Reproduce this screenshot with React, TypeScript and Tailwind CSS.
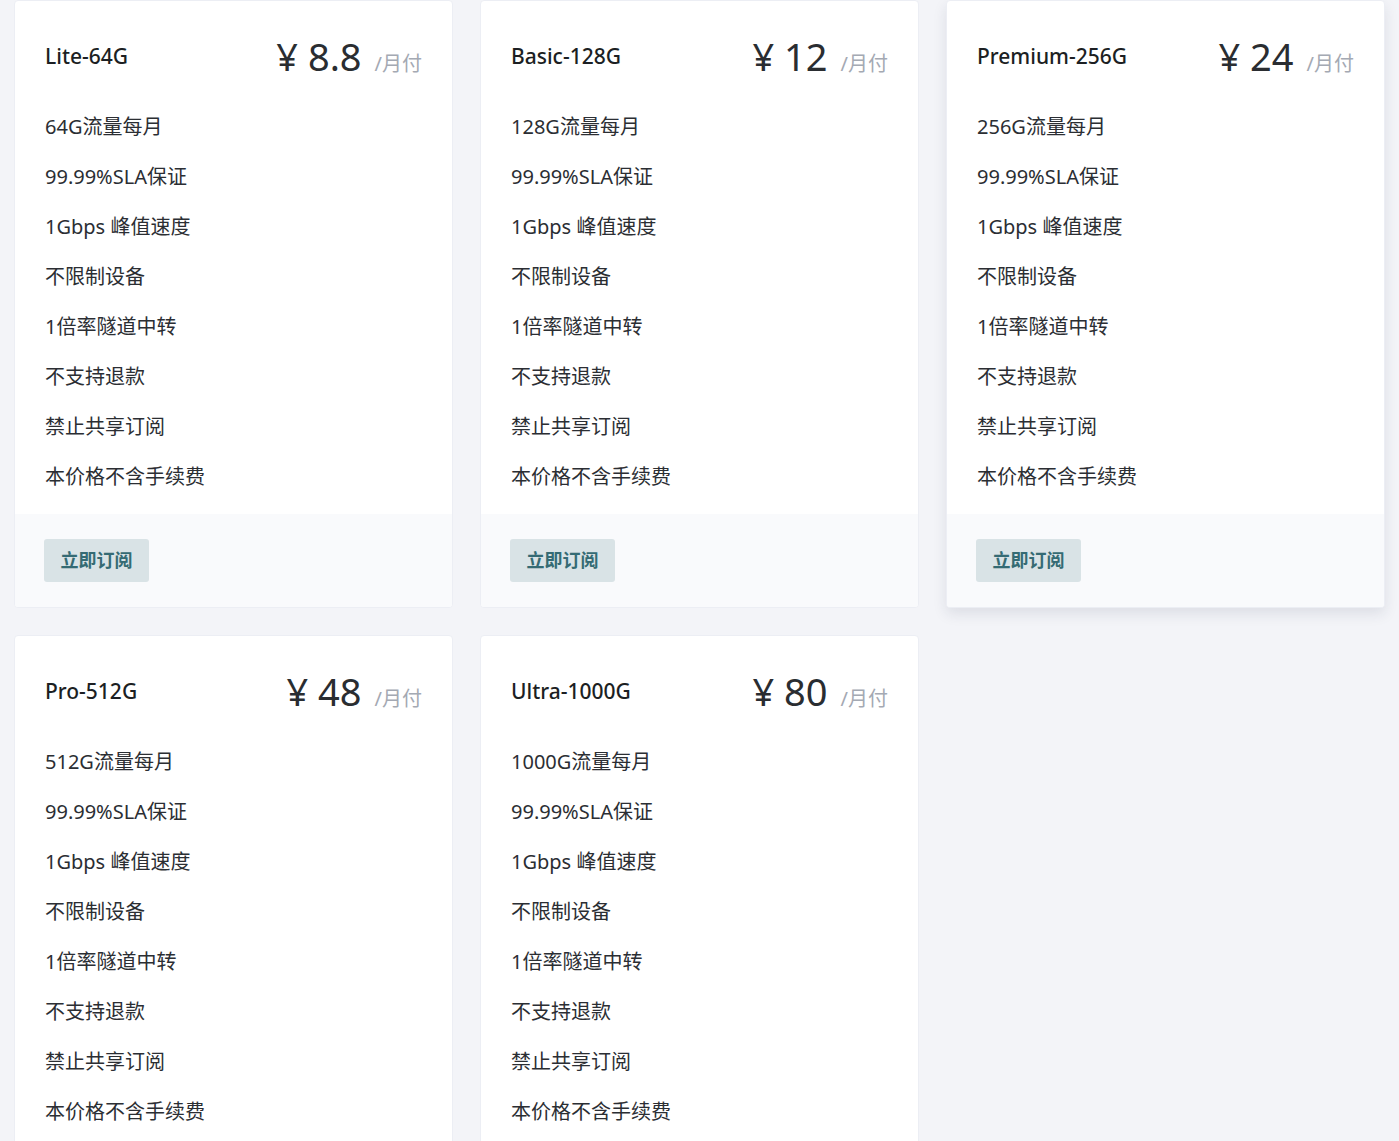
const plans = [
  { name: 'Lite-64G', price: '8.8', traffic: '64G' },
  { name: 'Basic-128G', price: '12', traffic: '128G' },
  { name: 'Premium-256G', price: '24', traffic: '256G', active: true },
  { name: 'Pro-512G', price: '48', traffic: '512G' },
  { name: 'Ultra-1000G', price: '80', traffic: '1000G' },
];

const features = [
  '99.99%SLA保证',
  '1Gbps 峰值速度',
  '不限制设备',
  '1倍率隧道中转',
  '不支持退款',
  '禁止共享订阅',
  '本价格不含手续费',
];

function PlanCard({ plan }: { plan: (typeof plans)[number] }) {
  return (
    <div
      className={
        'bg-white border border-[#eceef4] rounded-[4px] overflow-hidden ' +
        (plan.active ? 'shadow-[0_6px_14px_rgba(30,40,70,0.10)]' : '')
      }
    >
      {/* header */}
      <div className="h-[101px] px-[30px] pt-[10px] flex items-center justify-between">
        <div className="text-[21px] font-medium text-[#1c1f23]">{plan.name}</div>
        <div className="flex items-baseline">
          <span className="text-[38px] text-[#2a2d31]">¥ {plan.price}</span>
          <span className="ml-[13px] text-[20px] text-[#a4a9b3]">/月付</span>
        </div>
      </div>

      {/* features */}
      <div className="px-[30px] pb-[12px]">
        {[plan.traffic + '流量每月', ...features].map((f) => (
          <div key={f} className="h-[50px] flex items-center text-[20px] text-[#2b2e33]">
            {f}
          </div>
        ))}
      </div>

      {/* footer */}
      <div className="bg-[#f9fafc] px-[29px] py-[25px]">
        <button className="w-[105px] h-[43px] rounded-[3px] bg-[#d9e3e6] text-[18px] font-semibold text-[#356b74]">
          立即订阅
        </button>
      </div>
    </div>
  );
}

export default function App() {
  return (
    <div
      className="min-h-screen bg-[#f3f4f8] px-[14px] pb-[30px]"
      style={{ fontFamily: '"Noto Sans", "Noto Sans CJK SC", sans-serif' }}
    >
      <div className="grid grid-cols-3 gap-[27px]">
        {plans.map((p) => (
          <PlanCard key={p.name} plan={p} />
        ))}
      </div>
    </div>
  );
}
